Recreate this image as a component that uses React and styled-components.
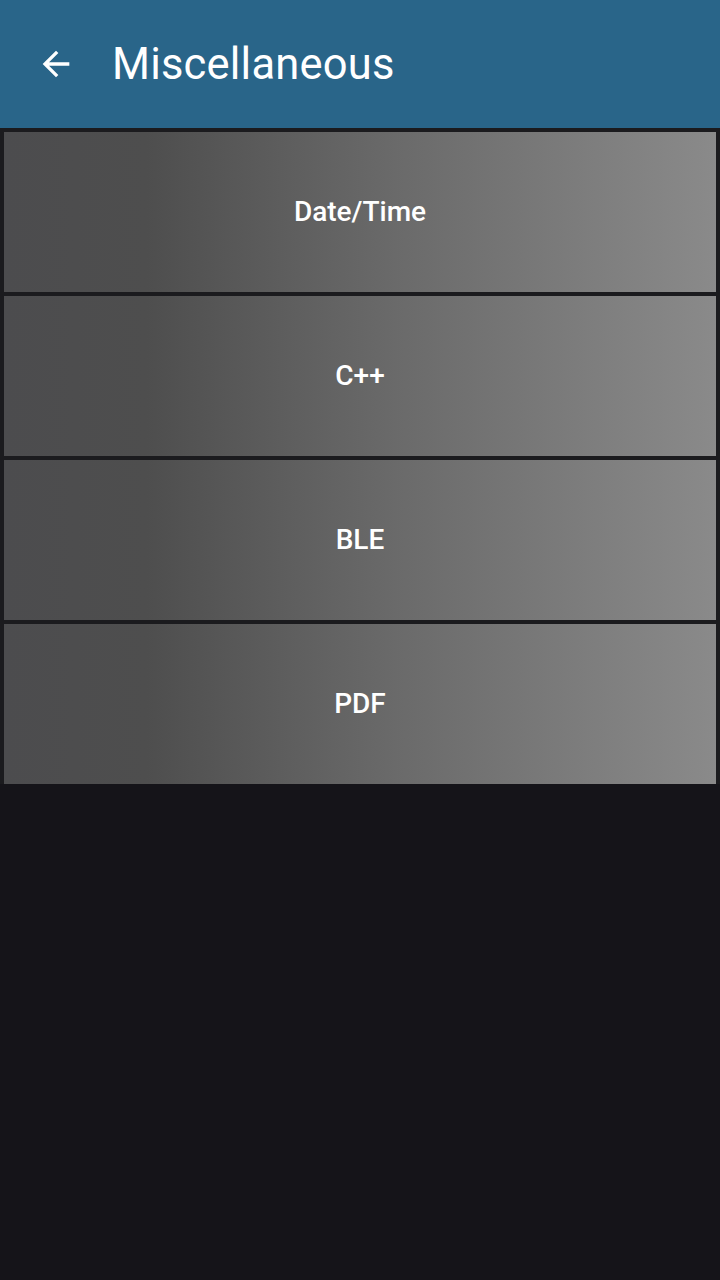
import React from "react";
import styled, { createGlobalStyle } from "styled-components";

const Global = createGlobalStyle`
  html, body {
    margin: 0;
    padding: 0;
    background: #151419;
    font-family: Roboto, "Noto Sans", sans-serif;
  }
`;

const Screen = styled.div`
  width: 720px;
  min-height: 1280px;
  background: #151419;
  display: flex;
  flex-direction: column;
`;

const Toolbar = styled.header`
  height: 128px;
  background: #296589;
  display: flex;
  align-items: center;
  color: #ffffff;
`;

const BackButton = styled.div`
  width: 112px;
  height: 128px;
  display: flex;
  align-items: center;
  padding-left: 36px;
  box-sizing: border-box;
`;

const Title = styled.h1`
  margin: 0;
  font-size: 43.5px;
  font-weight: 400;
  letter-spacing: 0.2px;
`;

const List = styled.div`
  display: flex;
  flex-direction: column;
  gap: 4px;
  padding: 4px 4px 0;
  background: #1b1b1e;
`;

const Item = styled.div`
  height: 160px;
  box-sizing: border-box;
  padding-bottom: 2px;
  display: flex;
  align-items: center;
  justify-content: center;
  background: linear-gradient(to right, #4c4c4e 0%, #4e4e4e 20%, #6a6a6a 55%, #8a8a8a 100%);
  color: #ffffff;
  font-size: 28px;
  font-weight: 500;
`;

const items = ["Date/Time", "C++", "BLE", "PDF"];

export default function App() {
  return (
    <Screen>
      <Global />
      <Toolbar>
        <BackButton>
          <svg width="40" height="40" viewBox="0 0 24 24">
            <path d="M20 11H7.83l5.59-5.59L12 4l-8 8 8 8 1.41-1.41L7.83 13H20v-2z" fill="#ffffff" />
          </svg>
        </BackButton>
        <Title>Miscellaneous</Title>
      </Toolbar>
      <List>
        {items.map((label) => (
          <Item key={label}>{label}</Item>
        ))}
      </List>
    </Screen>
  );
}
